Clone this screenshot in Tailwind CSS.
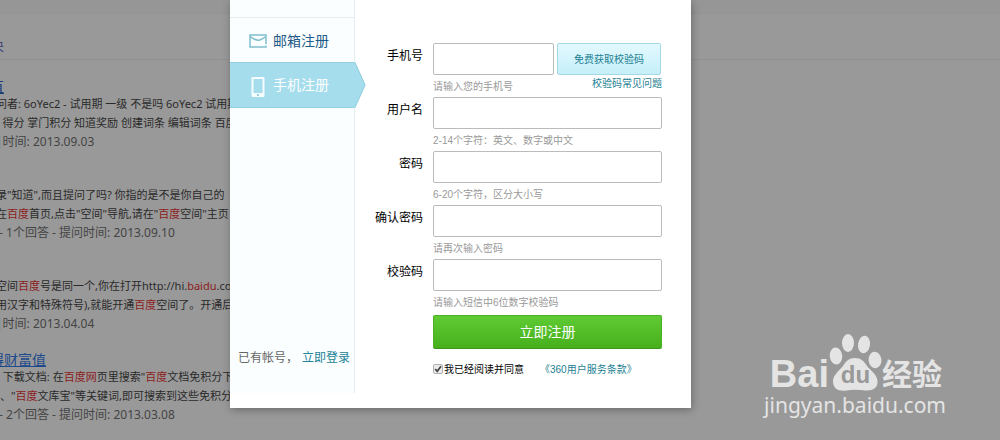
<!DOCTYPE html>
<html lang="zh-CN">

<head>
  <meta charset="UTF-8">
  <meta name="viewport" content="width=device-width, initial-scale=1.0">
  <title>手机注册</title>
  <script src="https://cdn.jsdelivr.net/npm/@tailwindcss/browser@4"></script>
</head>

<body class="relative min-h-screen overflow-hidden bg-[#999999] font-['Noto_Sans','Noto_Sans_CJK_SC',sans-serif]">
  <!-- Search results behind the dialog -->
  <header class="h-[14px] border-b border-[#939393] bg-[#969696]"></header>
  <nav class="flex h-[46px] items-end border-b border-[#919191] pb-1 text-xs text-[#3f3f78]">
    <span class="-ml-2">央</span>
  </nav>

  <main class="-ml-1 pt-4 text-[11px] leading-[19px] whitespace-nowrap text-[#2a2a2a]">
    <article class="mb-4">
      <h3 class="-ml-1.5 h-[18px] text-sm leading-[22px]"><a href="#" class="text-[#1d3c78] underline">直</a></h3>
      <p>问者: 6oYec2 - 试用期 一级 不是吗 6oYec2 试用期</p>
      <p>- 得分 掌门积分 知道奖励 创建词条 编辑词条 百度</p>
      <p class="text-xs leading-[19px] text-[#444444]">|时间: 2013.09.03</p>
    </article>
    <article class="mb-4">
      <h3 class="h-[18px]"></h3>
      <p>录"知道",而且提问了吗? 你指的是不是你自己的</p>
      <p>在<em class="text-[#8c1c1c] not-italic">百度</em>首页,点击"空间"导航,请在"<em class="text-[#8c1c1c] not-italic">百度</em>空间"主页</p>
      <p class="text-xs leading-[19px] text-[#444444]">&nbsp;- 1个回答 - 提问时间: 2013.09.10</p>
    </article>
    <article class="mb-4">
      <h3 class="h-[18px]"></h3>
      <p>空间<em class="text-[#8c1c1c] not-italic">百度</em>号是同一个,你在打开http://hi.<em class="text-[#8c1c1c] not-italic">baidu</em>.com</p>
      <p>用汉字和特殊符号),就能开通<em class="text-[#8c1c1c] not-italic">百度</em>空间了。开通后</p>
      <p class="text-xs leading-[19px] text-[#444444]">|时间: 2013.04.04</p>
    </article>
    <article>
      <h3 class="-ml-1.5 h-[18px] text-sm leading-[22px]"><a href="#" class="text-[#1d4a8c] underline">得财富值</a></h3>
      <p class="pl-1">&nbsp;下载文档: 在<em class="text-[#8c1c1c] not-italic">百度网</em>页里搜索"<em class="text-[#8c1c1c] not-italic">百度</em>文档免积分下</p>
      <p class="pl-1">、"<em class="text-[#8c1c1c] not-italic">百度</em>文库宝"等关键词,即可搜索到这些免积分</p>
      <p class="text-xs leading-[19px] text-[#444444]">&nbsp;- 2个回答 - 提问时间: 2013.03.08</p>
    </article>
  </main>

  <!-- Register dialog -->
  <section class="absolute top-0 left-[230px] flex w-[461px] bg-white pb-[15px] font-['Liberation_Sans','Noto_Sans_CJK_SC',sans-serif] shadow-[1px_2px_8px_rgba(0,0,0,0.3)]">
    <aside class="flex w-[125px] shrink-0 flex-col border-r border-[#e6eef0] bg-[#fafeff]">
      <div class="h-[18px] border-b border-[#e8eef0]"></div>
      <a href="#" class="flex h-11 items-center gap-1.5 pt-0.5 pl-[19px] text-sm text-[#1f5a88]">
        <svg class="h-[14px] w-[18px]" viewBox="0 0 18 14" fill="none" stroke="#7fbfcd" stroke-width="1.5">
          <path d="M17 10V1H1v12h16v-1.500" />
          <path d="M1.500 2.800C4.500 4.800 7 6.300 9 6.300s4.500-1.500 7.500-3.500" />
        </svg>
        邮箱注册
      </a>
      <a href="#" class="relative flex h-[46px] items-center gap-1.5 border-y border-[#93cfe0] bg-[#a5dded] pl-[19px] text-sm text-white">
        <svg class="mt-1 h-[22px] w-[18px]" viewBox="0 0 18 22" fill="none">
          <rect x="2.500" y="1" width="13" height="20" rx="1" fill="#f5fcfe" />
          <path d="M4.500 3h9v14h-9z" fill="#a5dded" />
          <circle cx="9" cy="19" r="1" fill="#7cc3d6" />
        </svg>
        手机注册
        <svg class="absolute -top-px left-[124px] h-[46px] w-3" viewBox="0 0 12 46">
          <path d="M0 0h1l10.500 23L1 46H0z" fill="#a5dded" />
          <path d="M1 .5l10 22.500L1 45.500" fill="none" stroke="#93cfe0" />
        </svg>
      </a>
      <p class="mt-auto pb-[26px] pl-2 text-xs leading-[18px] whitespace-nowrap text-[#666666]">已有帐号，<a href="#" class="ml-1 text-[#1d8296]">立即登录</a></p>
    </aside>

    <form class="flex-1 pt-[43px] pr-[29px] pb-[15px] text-[10px] text-[#999999]">
      <div class="grid grid-cols-[68px_1fr] gap-x-[10px]">
        <label for="phone" class="text-right text-xs leading-[26px] text-black">手机号</label>
        <div>
          <div class="flex gap-[3px]">
            <input id="phone" type="tel" class="h-8 w-[121px] rounded-xs border border-[#bbbbbb] bg-white px-2 text-xs text-black">
            <button type="button" class="h-8 w-[104px] rounded-xs border border-[#a3d9e5] bg-linear-to-b from-[#e3f9fe] to-[#c5eff9] text-[#1d7f92]">免费获取校验码</button>
          </div>
          <div class="flex h-[22px] justify-between">
            <span class="leading-[24px]">请输入您的手机号</span>
            <a href="#" class="leading-[18px] text-[#1d7f92]">校验码常见问题</a>
          </div>
        </div>

        <label for="username" class="text-right text-xs leading-[26px] text-black">用户名</label>
        <div>
          <input id="username" type="text" class="block h-8 w-full rounded-xs border border-[#bbbbbb] bg-white px-2 text-xs text-black">
          <p class="h-[22px] leading-[24px]">2-14个字符：英文、数字或中文</p>
        </div>

        <label for="password" class="text-right text-xs leading-[26px] text-black">密码</label>
        <div>
          <input id="password" type="password" class="block h-8 w-full rounded-xs border border-[#bbbbbb] bg-white px-2 text-xs text-black">
          <p class="h-[22px] leading-[24px]">6-20个字符，区分大小写</p>
        </div>

        <label for="confirm" class="text-right text-xs leading-[26px] text-black">确认密码</label>
        <div>
          <input id="confirm" type="password" class="block h-8 w-full rounded-xs border border-[#bbbbbb] bg-white px-2 text-xs text-black">
          <p class="h-[22px] leading-[24px]">请再次输入密码</p>
        </div>

        <label for="code" class="text-right text-xs leading-[26px] text-black">校验码</label>
        <div>
          <input id="code" type="text" class="block h-8 w-full rounded-xs border border-[#bbbbbb] bg-white px-2 text-xs text-black">
          <p class="h-[22px] leading-[24px]">请输入短信中6位数字校验码</p>
        </div>
      </div>

      <div class="pt-0.5 pl-[78px]">
        <button type="submit" class="h-[34px] w-full rounded-xs border border-[#4bb025] border-b-[#3c961c] bg-linear-to-b from-[#5fcb33] to-[#46b01c] text-sm text-white">立即注册</button>
        <div class="mt-[11px] flex h-[18px] items-center">
          <span class="relative h-[10px] w-[10px]">
            <input id="agree" type="checkbox" checked class="block h-[10px] w-[10px] appearance-none rounded-xs border border-[#b0b0b0] bg-[#ececec]">
            <svg class="pointer-events-none absolute inset-0 h-[10px] w-[10px]" viewBox="0 0 10 10" fill="none" stroke="#444444" stroke-width="1.700">
              <path d="M2.200 5l2 2.300L8 2.200" />
            </svg>
          </span>
          <label for="agree" class="ml-px text-black">我已经阅读并同意</label>
          <a href="#" class="ml-4 text-[#1d7f92]">《360用户服务条款》</a>
        </div>
      </div>
    </form>
  </section>

  <!-- Watermark -->
  <div class="absolute right-[54px] bottom-[21px] text-[#e4e4e4]">
    <div class="flex h-[60px] items-end justify-end pr-1">
      <span class="text-[38px] leading-[34px] font-bold font-['Liberation_Sans',sans-serif]">Bai</span>
      <span class="relative h-[60px] w-[53px]">
        <svg class="h-[60px] w-[53px]" viewBox="0 0 53 60" fill="#e4e4e4">
          <ellipse cx="7" cy="25" rx="6.200" ry="8.500" transform="rotate(-6 7 25)" />
          <ellipse cx="19" cy="12" rx="6" ry="9" />
          <ellipse cx="35" cy="13.500" rx="6" ry="8.800" transform="rotate(8 35 13.500)" />
          <ellipse cx="46" cy="29" rx="6.400" ry="8.200" transform="rotate(-6 46 29)" />
          <path d="M26 27c6 0 9 3 12 8 3 4 10 8 10.500 15 .5 8-6 10-12 9.500-7-.8-13-1-19 0C9.500 60.500 4 58 4 50c0-6 6-10 10-15 3-5 6-8 12-8z" />
        </svg>
        <span class="absolute inset-x-0 bottom-0 text-center text-[24px] leading-[32px] font-bold text-[#999999] font-['Liberation_Sans',sans-serif]">du</span>
      </span>
      <span class="text-[30px] leading-[38px] font-bold font-['Noto_Sans_CJK_SC',sans-serif]">经验</span>
    </div>
    <p class="text-[21px] leading-[28px]">jingyan.baidu.com</p>
  </div>
</body>

</html>
